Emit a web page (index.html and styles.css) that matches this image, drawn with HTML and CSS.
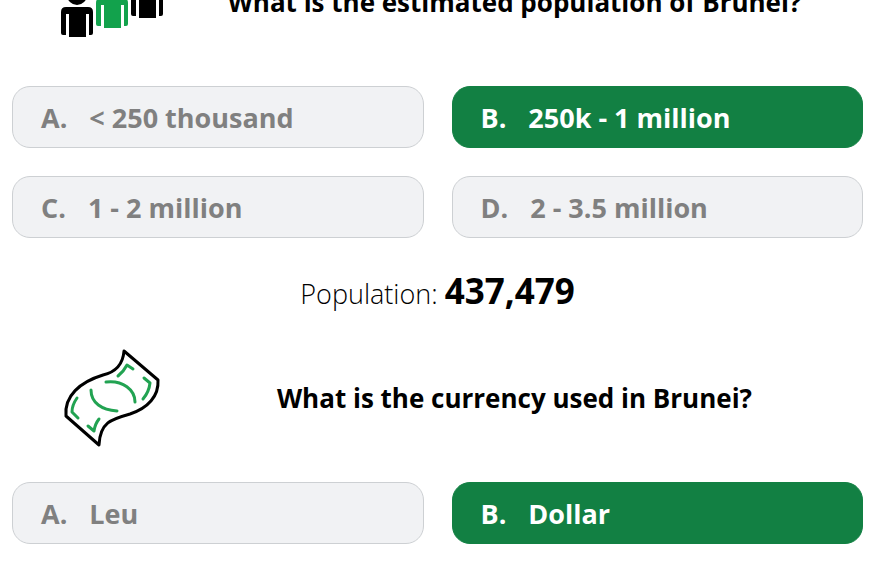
FILE: index.html
```html
<!DOCTYPE html>
<html lang="en">
<head>
<meta charset="utf-8">
<meta name="viewport" content="width=device-width, initial-scale=1">
<title>Brunei quiz</title>
<link rel="stylesheet" href="styles.css">
</head>
<body>
<main class="quiz">
  <section class="question">
    <header class="question-head">
      <svg class="icon" viewBox="0 0 106 100" aria-hidden="true">
        <defs>
          <g id="person">
            <circle cx="16" cy="-12" r="10"/>
            <path d="M5 0H27Q32 0 32 5V26Q32 28 30 28H28V7H25V30H8V7H5V28H2Q0 28 0 26V5Q0 0 5 0Z"/>
          </g>
        </defs>
        <use href="#person" x="1" y="55"/>
        <use href="#person" x="36" y="46" class="accent-fill"/>
        <use href="#person" x="71" y="36"/>
      </svg>
      <h2 class="title">What is the estimated population of Brunei?</h2>
    </header>
    <div class="options">
      <button class="option" type="button"><span>A.</span><span>&lt; 250 thousand</span></button>
      <button class="option correct" type="button"><span>B.</span><span>250k - 1 million</span></button>
      <button class="option" type="button"><span>C.</span><span>1 - 2 million</span></button>
      <button class="option" type="button"><span>D.</span><span>2 - 3.5 million</span></button>
    </div>
    <p class="answer">Population: <strong>437,479</strong></p>
  </section>
  <section class="question">
    <header class="question-head">
      <svg class="icon note" viewBox="0 0 106 100" aria-hidden="true">
        <path d="M64 3L98 32C99 48 88 60 70 66C52 71 40 74 39 97L6 68C4 48 20 34 43 27C56 24 63 16 64 3Z"/>
        <g class="accent-line">
          <path d="M46 34C63 32 75 42 75 54"/>
          <path d="M31 42C31 55 42 62 57 63"/>
          <path d="M58 28Q64 23 67 17L73 21"/>
          <path d="M84 30L90 35Q89 44 83 51"/>
          <path d="M17 50Q12 57 12 64L18 70"/>
          <path d="M28 78L34 83Q35 76 39 71"/>
        </g>
      </svg>
      <h2 class="title">What is the currency used in Brunei?</h2>
    </header>
    <div class="options">
      <button class="option" type="button"><span>A.</span><span>Leu</span></button>
      <button class="option correct" type="button"><span>B.</span><span>Dollar</span></button>
    </div>
  </section>
</main>
</body>
</html>
```
FILE: styles.css
```css
body {
  margin: 0;
  overflow: hidden;
  background: #fff;
  color: #000;
  font-family: "Segoe UI", "Open Sans", "Noto Sans", sans-serif;
}

/* The list is scrolled part-way into the first question. */
.quiz {
  margin-top: -48px;
  padding: 0 15px 0 12px;
}

.question-head {
  display: flex;
  align-items: center;
  height: 100px;
  padding-left: 48px;
  margin-bottom: 34px;
}

.icon {
  flex: none;
  width: 106px;
  height: 100px;
}

.accent-fill {
  fill: #12a24c;
}

.note {
  fill: none;
  stroke: #000;
  stroke-width: 3;
  stroke-linejoin: round;
  stroke-linecap: round;
}

.accent-line {
  stroke: #22a352;
}

.title {
  flex: 1;
  margin: 0;
  font-size: 26px;
  font-weight: 700;
  line-height: 36px;
  text-align: center;
}

.options {
  display: grid;
  grid-template-columns: 1fr 1fr;
  gap: 28px;
}

.option {
  display: flex;
  align-items: center;
  gap: 22px;
  height: 62px;
  padding: 0 28px;
  border: 1px solid #cdd0d3;
  border-radius: 18px;
  background: #f1f2f4;
  color: #808080;
  font: inherit;
  font-size: 27px;
  font-weight: 700;
}

.option.correct {
  border-color: #128043;
  background: #128043;
  color: #fff;
}

.answer {
  margin: 0;
  padding: 29px 0 30px;
  font-size: 27px;
  font-weight: 300;
  line-height: 48px;
  text-align: center;
}

.answer strong {
  font-size: 35px;
  font-weight: 700;
}
```
